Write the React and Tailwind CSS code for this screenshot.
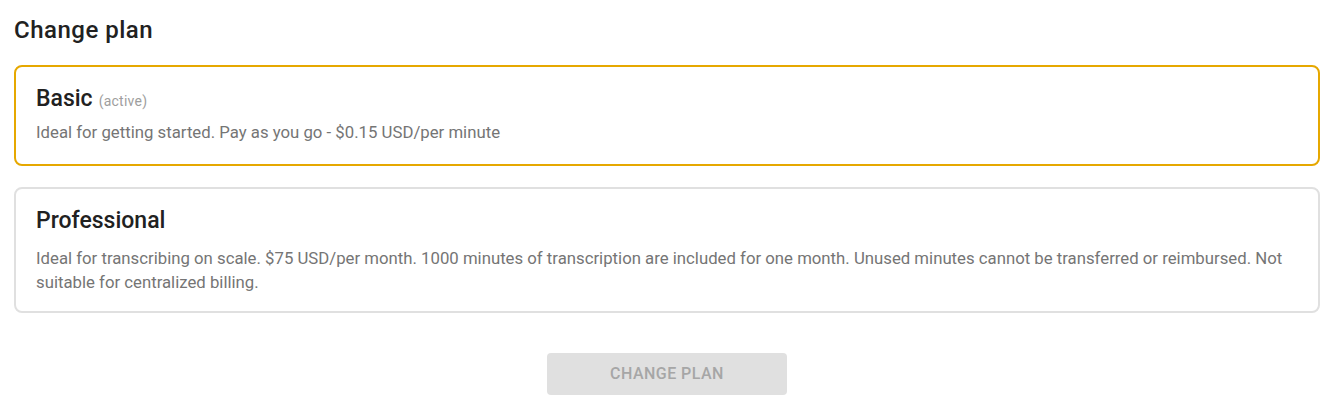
const plans = [
  {
    id: 'basic',
    name: 'Basic',
    active: true,
    description: 'Ideal for getting started. Pay as you go - $0.15 USD/per minute',
  },
  {
    id: 'professional',
    name: 'Professional',
    active: false,
    description:
      'Ideal for transcribing on scale. $75 USD/per month. 1000 minutes of transcription are included for one month. Unused minutes cannot be transferred or reimbursed. Not suitable for centralized billing.',
  },
]

function PlanCard({ plan }) {
  return (
    <div
      className={
        plan.active
          ? 'rounded-lg border-2 border-[#e6a800] px-5 pt-4 pb-5'
          : 'rounded-lg border-2 border-[#e0e0e0] px-5 pt-4 pb-[17px]'
      }
    >
      <div className="text-[23px] leading-8 font-medium text-[#212121]">
        {plan.name}
        {plan.active && (
          <span className="ml-1.5 text-[14px] leading-none font-normal tracking-[0.25px] text-[#9e9e9e]">
            (active)
          </span>
        )}
      </div>
      <p
        className={
          plan.active
            ? 'mt-[5px] text-[16.75px] leading-6 text-[#757575]'
            : 'mt-[9px] text-[16.75px] leading-6 text-[#757575]'
        }
      >
        {plan.description}
      </p>
    </div>
  )
}

export default function App() {
  return (
    <div className="min-h-screen bg-white pt-[14px] pl-[14px] pr-[9px] font-['Roboto',sans-serif]">
      <h2 className="text-[24px] leading-8 font-medium tracking-[0.5px] text-[#212121]">Change plan</h2>
      <div className="mt-[19px] flex flex-col gap-[21px]">
        {plans.map((p) => (
          <PlanCard key={p.id} plan={p} />
        ))}
      </div>
      <div className="mt-10 flex justify-center">
        <button
          disabled
          className="h-[42px] w-[240px] rounded bg-[#e0e0e0] text-[16px] font-medium uppercase tracking-[0.46px] text-[#a6a6a6]"
        >
          Change plan
        </button>
      </div>
    </div>
  )
}
